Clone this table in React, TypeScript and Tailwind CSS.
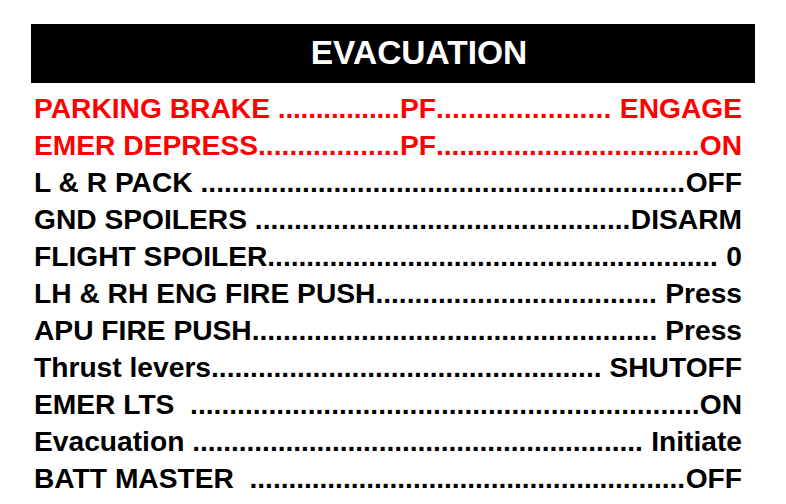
import React, { useLayoutEffect, useRef, useState } from "react"

type Row = {
  label: string
  value: string
  pf?: boolean
  red?: boolean
}

const rows: Row[] = [
  { label: "PARKING BRAKE ", value: " ENGAGE", pf: true, red: true },
  { label: "EMER DEPRESS", value: "ON", pf: true, red: true },
  { label: "L & R PACK ", value: "OFF" },
  { label: "GND SPOILERS ", value: "DISARM" },
  { label: "FLIGHT SPOILER", value: " 0" },
  { label: "LH & RH ENG FIRE PUSH", value: " Press" },
  { label: "APU FIRE PUSH", value: " Press" },
  { label: "Thrust levers", value: " SHUTOFF" },
  { label: "EMER LTS  ", value: "ON" },
  { label: "Evacuation ", value: " Initiate" },
  { label: "BATT MASTER  ", value: "OFF" },
]

// dot leader: whole dots, spaced a hair wider or tighter so they fill the slot exactly
function Leader() {
  const ref = useRef<HTMLSpanElement>(null)
  const [fill, setFill] = useState({ count: 0, spacing: 0 })

  useLayoutEffect(() => {
    const el = ref.current
    if (!el) return
    const ctx = document.createElement("canvas").getContext("2d")
    if (!ctx) return
    const cs = getComputedStyle(el)
    ctx.font = `${cs.fontWeight} ${cs.fontSize} ${cs.fontFamily}`
    const dot = ctx.measureText(".").width
    const w = el.clientWidth - 0.5
    const count = Math.max(0, Math.round(w / dot))
    setFill({ count, spacing: count ? (w - count * dot) / count : 0 })
  }, [])

  return (
    <span ref={ref} className="flex min-w-0 flex-1 overflow-hidden">
      <span style={{ letterSpacing: `${fill.spacing}px` }}>{".".repeat(fill.count)}</span>
    </span>
  )
}

function ChecklistRow({ row }: { row: Row }) {
  return (
    <div
      className={`flex h-[37px] items-center whitespace-pre leading-[37px] ${
        row.red ? "text-[#ff0000]" : "text-black"
      }`}
    >
      {row.pf ? (
        <>
          <span className="flex w-[366px] shrink-0">
            <span className="shrink-0">{row.label}</span>
            <Leader />
          </span>
          <span className="shrink-0">PF</span>
        </>
      ) : (
        <span className="shrink-0">{row.label}</span>
      )}
      <Leader />
      <span className="shrink-0">{row.value}</span>
    </div>
  )
}

export default function App() {
  return (
    <div className="h-[504px] w-[786px] overflow-hidden bg-white pl-[31px] pt-[24px] font-['Liberation_Sans',Arial,sans-serif]">
      {/* Title bar */}
      <div className="flex h-[59px] w-[724px] items-center justify-center bg-black pl-[52px] text-[33.5px] font-bold text-white">
        EVACUATION
      </div>

      {/* Checklist items */}
      <div className="ml-[3px] mt-[7px] w-[708px] text-[28.2px] font-bold">
        {rows.map((row) => (
          <ChecklistRow key={row.label} row={row} />
        ))}
      </div>
    </div>
  )
}
